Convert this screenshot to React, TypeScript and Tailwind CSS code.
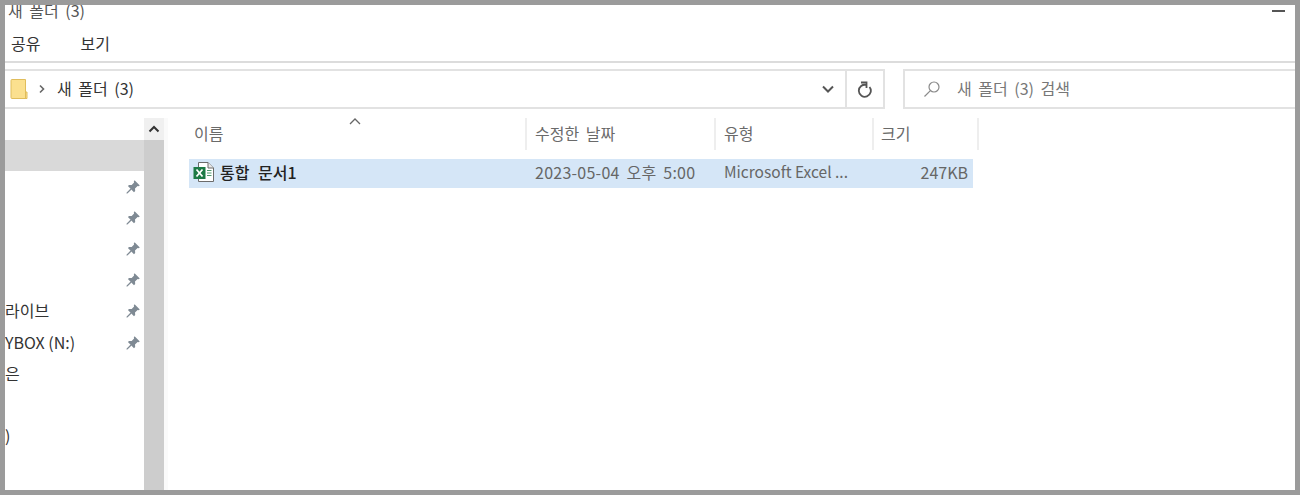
const font = { fontFamily: '"Noto Sans CJK KR", "Noto Sans", sans-serif' };

const PinIcon = (): JSX.Element => (
  <svg width="16" height="16" viewBox="0 0 16 16" fill="#7f8a94">
    <path d="M9.6 1.2 14.8 6.4 13.6 7.3 12.6 6.9 10 9.4 10.2 12 9 13.2 2.9 7.1 4.1 5.9 6.7 6.1 9.1 3.5 8.8 2.4Z" />
    <path d="M5.6 9.6 6.6 10.6 2.4 14.6 1.5 14.6 1.5 13.7Z" />
  </svg>
);

const ExcelIcon = (): JSX.Element => (
  <svg width="24" height="24" viewBox="0 0 24 24">
    <path d="M6.5 2.5H16L21.5 8V21.5H6.5Z" fill="#fff" stroke="#6b6b6b" />
    <path d="M16 2.5V8H21.5" fill="#e8e8e8" stroke="#6b6b6b" />
    <rect x="1.5" y="7" width="12" height="12" fill="#1d7a45" />
    <path d="M4.5 9.5 10.5 16.5M10.5 9.5 4.5 16.5" stroke="#fff" strokeWidth="1.8" />
    <path d="M15 10.5H19.5M15 13H19.5M15 15.5H19.5" stroke="#4f9a6e" strokeWidth="1.2" />
  </svg>
);

const FolderIcon = (): JSX.Element => (
  <svg width="18" height="22" viewBox="0 0 18 22">
    <path d="M1 2.5A1 1 0 0 1 2 1.5H15.5V14H17V20.5H2A1 1 0 0 1 1 19.5Z" fill="#fbe08f" stroke="#e0bd5c" />
    <path d="M15.5 14V20.5" stroke="#e0bd5c" />
  </svg>
);

const sidebarRows = [
  { id: 1, label: '', pinned: true },
  { id: 2, label: '', pinned: true },
  { id: 3, label: '', pinned: true },
  { id: 4, label: '', pinned: true },
  { id: 5, label: '라이브', pinned: true },
  { id: 6, label: 'YBOX (N:)', pinned: true },
  { id: 7, label: '은', pinned: false },
  { id: 8, label: '', pinned: false },
  { id: 9, label: ')', pinned: false },
];

const headers = [
  { label: '이름', width: 'w-[338px]', pad: 'pl-[5px]' },
  { label: '수정한 날짜', width: 'w-[189px]', pad: 'pl-[8px]' },
  { label: '유형', width: 'w-[158px]', pad: 'pl-[8px]' },
  { label: '크기', width: 'w-[105px]', pad: 'pl-[7px]' },
];

export default function App(): JSX.Element {
  return (
    <div
      style={font}
      className="w-[1300px] h-[495px] overflow-hidden border-[5px] border-[#9b9b9b] bg-white text-[16px] [word-spacing:3px] text-[#444]"
    >
      {/* title bar */}
      <div className="flex justify-between h-[16px] overflow-hidden">
        <span className="mt-[-6px] ml-[3px] leading-[22px] text-[#555]">새 폴더 (3)</span>
        <div className="mt-[5px] mr-[10px] w-[13px] h-[2px] bg-[#555]" />
      </div>

      {/* ribbon tabs */}
      <div className="flex h-[42px] items-center gap-[40px] pl-[6px] pt-[3px] border-b-2 border-[#dcdcdc] text-[#333]">
        <span>공유</span>
        <span>보기</span>
      </div>

      {/* address row */}
      <div className="flex h-[40px] mt-[6px]">
        <div className="flex flex-1 items-center border-y-2 border-r-2 border-[#e2e2e2] pl-[5px]">
          <FolderIcon />
          <svg className="ml-[10px]" width="8" height="10" viewBox="0 0 8 10" fill="none" stroke="#666" strokeWidth="1.6">
            <path d="M2 1.500 5.500 5 2 8.500" />
          </svg>
          <span className="ml-[11px] mt-[-3px] text-[#333]">새 폴더 (3)</span>
          <svg className="ml-auto mr-[11px]" width="12" height="8" viewBox="0 0 12 8" fill="none" stroke="#555" strokeWidth="2">
            <path d="M1 1.500 6 6.500 11 1.500" />
          </svg>
        </div>
        <div className="flex w-[38px] items-center justify-center border-y-2 border-r-2 border-[#e2e2e2] shrink-0">
          <svg width="16" height="17" viewBox="0 0 16 17" fill="none" stroke="#555" strokeWidth="1.8">
            <path d="M12.500 6A6 6 0 1 1 9.500 4" />
            <path d="M4 1.500H9.500V7" />
          </svg>
        </div>
        <div className="flex w-[392px] ml-[18px] items-center border-y-2 border-l-2 border-[#e2e2e2] pl-[18px] text-[#777] shrink-0">
          <svg width="18" height="18" viewBox="0 0 18 18" fill="none" stroke="#8a8a8a" strokeWidth="1.2">
            <circle cx="11" cy="7" r="5" />
            <path d="M7.400 10.600 1.500 16.500" />
          </svg>
          <span className="ml-[16px] mt-[-3px]">새 폴더 (3) 검색</span>
        </div>
      </div>

      {/* body */}
      <div className="flex h-[372px] mt-[9px]">
        <div className="w-[139px] pt-[22px] shrink-0">
          <div className="h-[31px] bg-[#d9d9d9]" />
          {sidebarRows.map((row) => (
            <div key={row.id} className="flex h-[31.2px] items-center justify-between pr-[3px] [word-spacing:0px] text-[#333]">
              <span className="mt-[-2px] whitespace-nowrap">{row.label}</span>
              {row.pinned && <PinIcon />}
            </div>
          ))}
        </div>

        <div className="flex flex-col w-[20px] bg-[#cdcdcd] shrink-0">
          <div className="flex h-[22px] items-center justify-center bg-[#f0f0f0]">
            <svg width="12" height="8" viewBox="0 0 12 8" fill="none" stroke="#333" strokeWidth="2">
              <path d="M1.500 6.500 6 2 10.500 6.500" />
            </svg>
          </div>
        </div>

        <div className="flex-1 pl-[21px] border-l-4 border-[#fafafa]">
          <div className="relative flex h-[32px] text-[#6a6a6a]">
            <svg className="absolute left-[160px] top-0" width="12" height="7" viewBox="0 0 12 7" fill="none" stroke="#666" strokeWidth="1.300">
              <path d="M1 6 6 1 11 6" />
            </svg>
            {headers.map((h) => (
              <div key={h.label} className={`${h.width} ${h.pad} pb-[2px] flex items-center border-r-2 border-[#eeeeee] shrink-0`}>
                {h.label}
              </div>
            ))}
          </div>

          <div className="flex items-center w-[784px] h-[29px] mt-[9px] pb-[3px] bg-[#d5e6f7]">
            <div className="flex w-[336px] items-center pl-[3px] text-[#222] shrink-0">
              <ExcelIcon />
              <span className="ml-[4px] font-medium [word-spacing:5px]">통합 문서1</span>
            </div>
            <span className="w-[189px] pl-[10px] tracking-[0.25px] text-[#666] shrink-0">2023-05-04 오후 5:00</span>
            <span className="w-[158px] pl-[10px] text-[15.500px] [word-spacing:0px] text-[#666] shrink-0">Microsoft Excel ...</span>
            <span className="flex-1 pr-[5px] text-right text-[#666]">247KB</span>
          </div>
        </div>
      </div>
    </div>
  );
}
